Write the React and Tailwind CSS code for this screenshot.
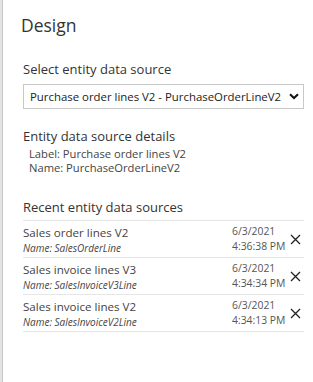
import React from "react";

const rows = [
  { title: "Sales order lines V2", name: "Name: SalesOrderLine", date: "6/3/2021", time: "4:36:38 PM" },
  { title: "Sales invoice lines V3", name: "Name: SalesInvoiceV3Line", date: "6/3/2021", time: "4:34:34 PM" },
  { title: "Sales invoice lines V2", name: "Name: SalesInvoiceV2Line", date: "6/3/2021", time: "4:34:13 PM" },
];

function XIcon() {
  return (
    <svg width="11" height="11" viewBox="0 0 11 11" className="block">
      <path d="M1 1 L10 10 M10 1 L1 10" stroke="#222" strokeWidth="1.3" fill="none" />
    </svg>
  );
}

export default function App() {
  return (
    <div className="flex h-[382px] w-[313px] bg-white text-[#333333]" style={{ fontFamily: '"Open Sans", "Noto Sans", sans-serif' }}>
      <div className="w-[3px] bg-[#e4e4e4] border-r border-[#c6c6c6]" />
      <div className="flex-1 pl-[18px] pr-[9px]">
        <h1 className="mt-[12px] text-[17.5px] leading-[26px] text-[#333333]">Design</h1>
        <div className="ml-[2px]">
          <div className="mt-[22px] text-[13px] leading-[18px]">Select entity data source</div>
          <div className="mt-[6px] flex h-[25px] items-center justify-between border border-[#c8c8c8] pl-[6px] pr-[4px]">
            <span className="text-[11.4px] text-[#222] whitespace-nowrap">Purchase order lines V2 - PurchaseOrderLineV2</span>
            <svg width="10" height="7" viewBox="0 0 10 7">
              <path d="M1 1.2 L5 5 L9 1.2" stroke="#111" strokeWidth="2" fill="none" />
            </svg>
          </div>
          <div className="mt-[18px] text-[13px] leading-[18px]">Entity data source details</div>
          <div className="mt-[2px] pl-[6px] text-[11.2px] leading-[14px] text-[#444]">
            <div>Label: Purchase order lines V2</div>
            <div>Name: PurchaseOrderLineV2</div>
          </div>
          <div className="mt-[23px] text-[13px] leading-[18px]">Recent entity data sources</div>
          <div className="mt-[4px] border-b border-[#e6e6e6]">
            {rows.map((r) => (
              <div key={r.title} className="flex h-[37px] items-center border-t border-[#e6e6e6]">
                <div className="flex-1">
                  <div className="text-[11.6px] leading-[17px] text-[#444]">{r.title}</div>
                  <div className="text-[10px] italic leading-[14px] text-[#444]">{r.name}</div>
                </div>
                <div className="w-[58px] text-[10.4px] leading-[15px] text-[#555]">
                  <div>{r.date}</div>
                  <div>{r.time}</div>
                </div>
                <div className="w-[14px] flex justify-start">
                  <XIcon />
                </div>
              </div>
            ))}
          </div>
        </div>
      </div>
    </div>
  );
}
